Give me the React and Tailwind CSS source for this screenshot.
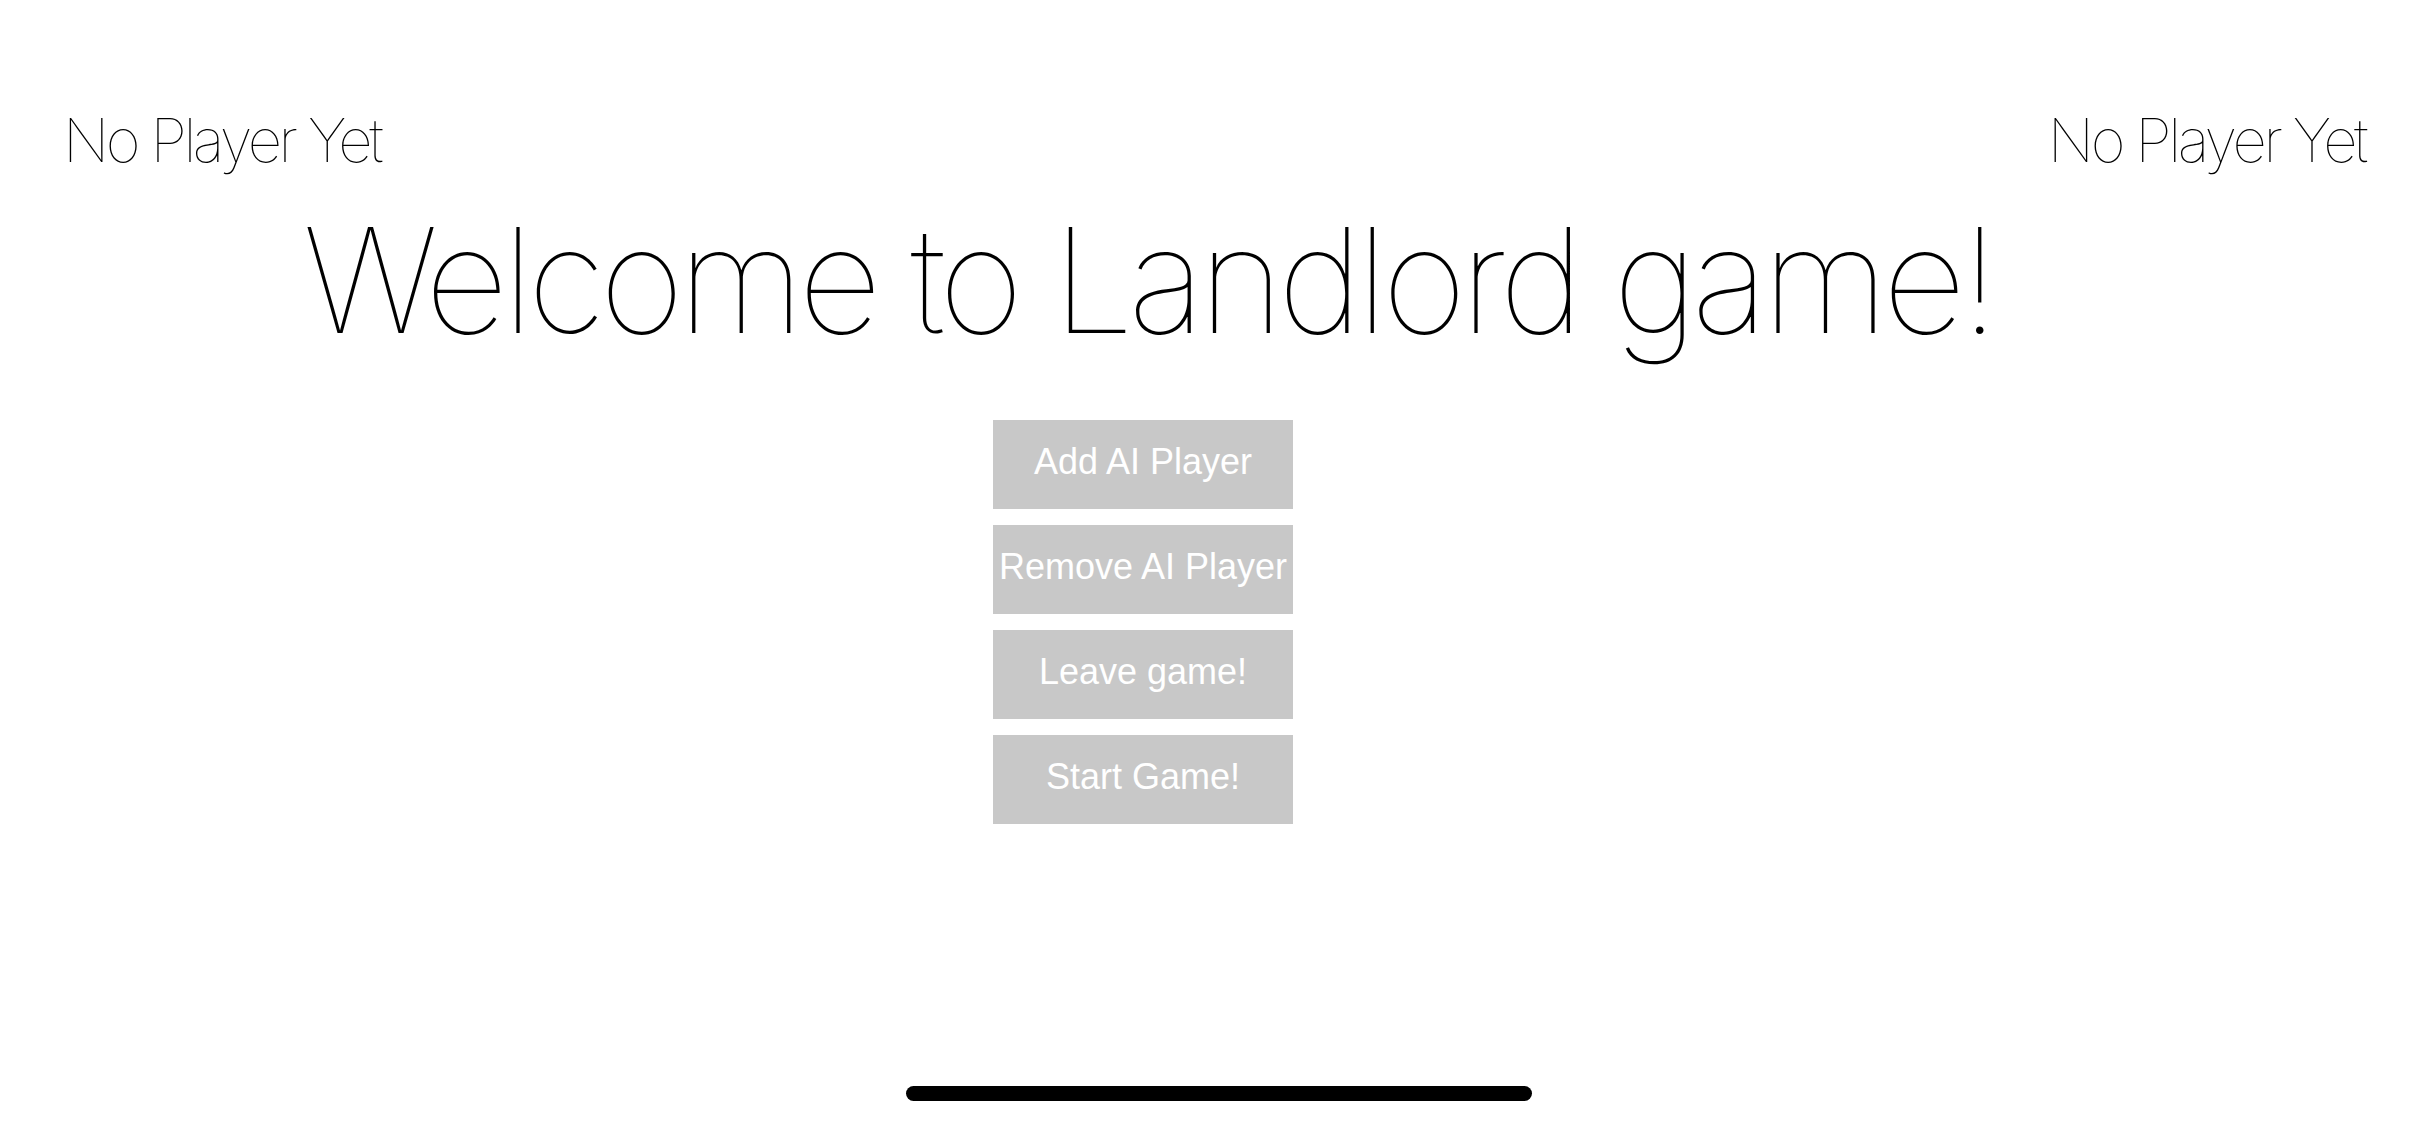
import React from "react";

const thin = { fontFamily: "Inter, 'Noto Sans', sans-serif" };

function MenuButton({ children }) {
  return (
    <button
      className="flex h-[89px] w-[300px] items-center justify-center bg-[#c8c8c8] pb-[5px] text-[36px] leading-none text-white"
      style={{ fontFamily: "'Liberation Sans', Arial, sans-serif" }}
    >
      {children}
    </button>
  );
}

export default function App() {
  return (
    <div className="flex h-[1125px] w-[2436px] flex-col bg-white overflow-hidden">
      <div className="flex justify-between pl-[63px] pr-[71px] pt-[110px]">
        <div className="text-[60px] leading-none font-thin text-black tracking-[-0.058em]" style={thin}>
          No Player Yet
        </div>
        <div className="text-[60px] leading-none font-thin text-black tracking-[-0.058em]" style={thin}>
          No Player Yet
        </div>
      </div>
      <div className="flex flex-col items-center pr-[140px] pt-[37px]">
        <h1 className="text-[146px] leading-none font-thin text-black tracking-[-0.042em]" style={thin}>
          Welcome to Landlord game!
        </h1>
        <div className="mt-[67px] flex flex-col gap-[16px] pr-[10px]">
          <MenuButton>Add AI Player</MenuButton>
          <MenuButton>Remove AI Player</MenuButton>
          <MenuButton>Leave game!</MenuButton>
          <MenuButton>Start Game!</MenuButton>
        </div>
      </div>
      <div className="mt-auto mb-[24px] flex justify-center pl-[2px]">
        <div className="h-[15px] w-[626px] rounded-full bg-black" />
      </div>
    </div>
  );
}
